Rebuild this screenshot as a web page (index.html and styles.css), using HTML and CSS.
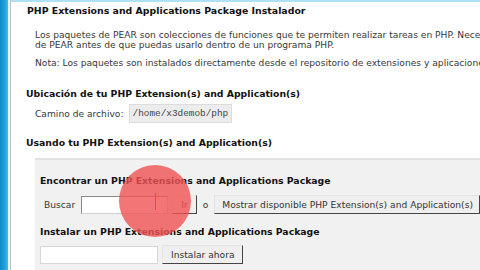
FILE: index.html
```html
<!DOCTYPE html>
<html>
<head>
<meta charset="utf-8">
<link rel="stylesheet" href="styles.css">
</head>
<body>
<div class="page">
  <div class="sidebar"></div>
  <div class="strip"></div>
  <div class="main">
    <div class="topband"></div>
    <h1 class="h">PHP Extensions and Applications Package Instalador</h1>
    <div class="para">
      <p class="line">Los paquetes de PEAR son colecciones de funciones que te permiten realizar tareas en PHP. Necesitas instalar un paquete</p>
      <p class="line">de PEAR antes de que puedas usarlo dentro de un programa PHP.</p>
    </div>
    <p class="line note">Nota: Los paquetes son instalados directamente desde el repositorio de extensiones y aplicaciones de PHP.</p>
    <h2 class="h h-ubic">Ubicación de tu PHP Extension(s) and Application(s)</h2>
    <div class="pathrow">
      <span class="label">Camino de archivo:</span>
      <span class="path">/home/x3demob/php</span>
    </div>
    <h2 class="h h-usando">Usando tu PHP Extension(s) and Application(s)</h2>
    <div class="panel">
      <h3 class="h h-find">Encontrar un PHP Extensions and Applications Package</h3>
      <div class="row">
        <span class="label">Buscar</span>
        <span class="input input-search"></span>
        <span class="btn btn-ir">Ir</span>
        <span class="label o">o</span>
        <span class="btn btn-show">Mostrar disponible PHP Extension(s) and Application(s)</span>
      </div>
      <h3 class="h h-inst">Instalar un PHP Extensions and Applications Package</h3>
      <div class="row row-inst">
        <span class="input input-inst"></span>
        <span class="btn btn-inst">Instalar ahora</span>
      </div>
    </div>
  </div>
</div>
<div class="cursor-ring"></div>
<div class="caret"></div>
</body>
</html>
```
FILE: styles.css
```css
html, body {
  margin: 0;
  padding: 0;
  width: 480px;
  height: 270px;
  overflow: hidden;
  background: #ffffff;
  font-family: "DejaVu Sans", Verdana, sans-serif;
  color: #2a2a2a;
}
.page {
  display: flex;
  height: 270px;
}
.sidebar {
  width: 8px;
  flex: none;
  background: linear-gradient(90deg, #1189c9, #20a4e0 60%, #4db5e3);
}
.strip {
  width: 2px;
  flex: none;
  background: #e6f1f6;
  border-right: 1px solid #b9c3c8;
}
.main {
  flex: 1;
  min-width: 0;
  display: flex;
  flex-direction: column;
  background: #fff;
  overflow: hidden;
}
.topband {
  height: 3px;
  background: #aee1f3;
}
.h {
  margin: 0;
  font-weight: bold;
  font-size: 9.3px;
  color: #111;
  white-space: nowrap;
  line-height: 12px;
}
h1.h {
  margin: 3px 0 0 16px;
  font-size: 9.4px;
}
.para {
  margin: 13px 0 0 24px;
}
.line {
  margin: 0;
  font-size: 9.15px;
  line-height: 10px;
  white-space: nowrap;
  color: #383838;
}
.note {
  margin: 8px 0 0 24px;
}
.h-ubic {
  margin: 20px 0 0 15px;
}
.pathrow {
  display: flex;
  align-items: center;
  gap: 5px;
  margin: 4px 0 0 24px;
}
.label {
  font-size: 9.15px;
  color: #383838;
}
.path {
  background: #ececec;
  border: 1px solid #dcdcdc;
  padding: 3px 3px;
  font-family: "Liberation Mono", monospace;
  font-size: 9.4px;
  color: #444;
  line-height: 11px;
}
.h-usando {
  margin: 14px 0 0 15px;
}
.panel {
  margin: 9px 0 0 24px;
  background: #f1f1f1;
  border-top: 2px solid #e2e2e2;
  padding: 13px 0 6px 5px;
  flex: 1;
}
.row {
  display: flex;
  align-items: center;
  gap: 4px;
  margin-top: 8px;
}
.row .label:first-child {
  margin-left: 4px;
}
.input {
  height: 18px;
  background: #fff;
  border: 1px solid #d0d0d0;
  border-top-color: #8a8a8a;
  border-left-color: #8a8a8a;
  box-sizing: border-box;
}
.input-search {
  width: 93px;
  margin-left: 2px;
}
.input-inst {
  width: 118px;
  border-color: #d6d6d6;
}
.btn {
  height: 19px;
  box-sizing: border-box;
  display: inline-flex;
  align-items: center;
  padding: 0 5px;
  background: #efefef;
  border: 1px solid #e4e4e4;
  border-right-color: #444;
  border-bottom-color: #444;
  font-size: 9.15px;
  color: #333;
  white-space: nowrap;
}
.btn-ir {
  padding: 0 8px;
}
.o {
  margin: 0 2px;
}
.btn-show {
  padding: 0 6px 0 7px;
}
.btn-inst {
  padding: 0 8px;
}
.h-find {
  margin-top: 2px;
}
.h-inst {
  margin-top: 12px;
}
.row-inst {
  margin-top: 7px;
}
.cursor-ring {
  position: absolute;
  left: 119px;
  top: 165px;
  width: 72px;
  height: 72px;
  border-radius: 50%;
  background: rgba(240, 82, 82, 0.8);
}
.caret {
  position: absolute;
  left: 155px;
  top: 193px;
  width: 1px;
  height: 17px;
  background: #777;
}
```
